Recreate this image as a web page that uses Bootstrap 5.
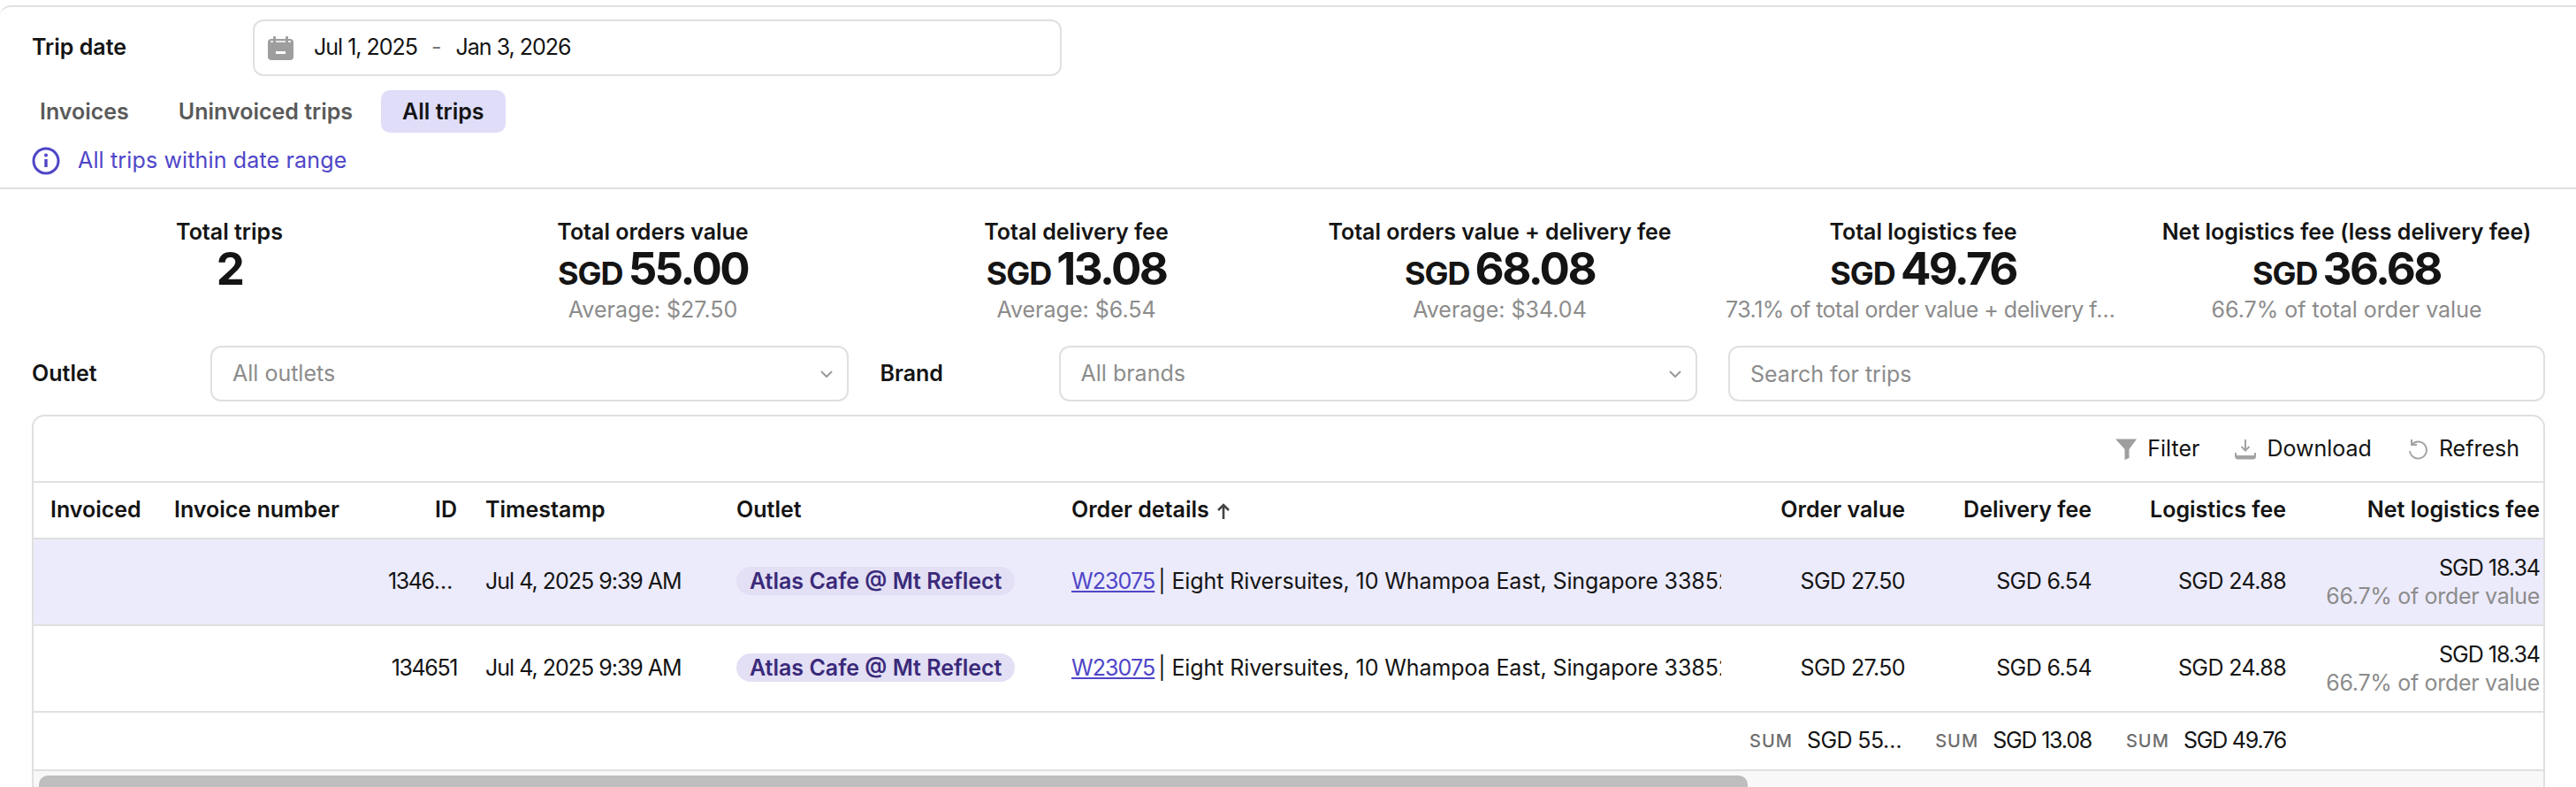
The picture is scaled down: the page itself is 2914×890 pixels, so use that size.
<!DOCTYPE html>
<html lang="en">
<head>
    <meta charset="UTF-8">
    <meta name="viewport" content="width=device-width, initial-scale=1.0">
    <title>Trips</title>
    <link href="https://cdn.jsdelivr.net/npm/bootstrap@5.3.0/dist/css/bootstrap.min.css" rel="stylesheet">
    <style>
        html, body {
            height: 890px;
            overflow: hidden;
        }
        body {
            font-family: Inter, "Liberation Sans", sans-serif;
            font-size: 25px;
            color: #141414;
            background: #fff;
        }
        .page-frame {
            margin-top: 6px;
            border-top: 2px solid #e0e0e0;
            border-top-left-radius: 12px;
        }
        .head-block {
            padding: 14px 36px 14px;
            border-bottom: 2px solid #e0e0e0;
            height: 206px;
        }
        .field-label {
            font-weight: 600;
            font-size: 25px;
        }
        .date-label { width: 250px; }
        .date-box {
            width: 915px;
            height: 64px;
            border: 2px solid #e0e0e0;
            border-radius: 12px;
            padding-left: 15px;
        }
        .date-icon { margin-right: 23px; }
        .date-box .dash { color: #777; margin: 0 16px; }
        .num-tight { letter-spacing: -1px; }
        .tab-row { margin-top: 16px; margin-left: -15px; gap: 8px; }
        .tab-row .nav-link {
            height: 48px;
            line-height: 48px;
            padding: 0 24px;
            font-size: 25px;
            font-weight: 600;
            color: #5a5a5a;
            border-radius: 10px;
        }
        .tab-row .nav-link.active {
            background: #dfddf8;
            color: #141414;
        }
        .info-line {
            margin-top: 16px;
            height: 32px;
            gap: 20px;
            color: #4f46c8;
            letter-spacing: 0.150px;
        }
        .stat-grid {
            display: grid;
            grid-template-columns: repeat(6, 479px);
            padding: 30px 20px 0;
            text-align: center;
        }
        .stat-title { font-weight: 600; line-height: 36px; font-size: 25px; }
        .stat-value {
            font-weight: 700;
            font-size: 51px;
            letter-spacing: -2.600px;
            line-height: 48px;
            height: 48px;
        }
        .stat-value .unit { font-size: 36px; letter-spacing: -1px; margin-right: 6px; }
        .stat-note {
            color: #8c8c8c;
            line-height: 40px;
            margin-top: 2px;
            padding: 0 16px;
            white-space: nowrap;
        }
        .note-cut {
            overflow: hidden;
            text-overflow: ellipsis;
            letter-spacing: -0.500px;
        }
        .filter-grid {
            display: grid;
            grid-template-columns: repeat(3, 924px);
            column-gap: 35.5px;
            padding: 21px 36px 0;
        }
        .filter-cell { height: 63px; }
        .filter-cell .field-label { width: 202px; flex: none; }
        .filter-cell .form-select, .filter-cell .form-control {
            height: 63px;
            font-size: 25px;
            border: 2px solid #e0e0e0;
            border-radius: 12px;
            padding: 0 23px;
            color: #8c8c8c;
            box-shadow: none;
        }
        .filter-cell .form-select {
            background-image: url("data:image/svg+xml,%3csvg xmlns='http://www.w3.org/2000/svg' viewBox='0 0 14 8'%3e%3cpath fill='none' stroke='%23999' stroke-width='2' d='M1 1l6 6 6-6'/%3e%3c/svg%3e");
            background-size: 14px 8px;
            background-position: right 16px center;
        }
        .filter-cell .form-control::placeholder { color: #8c8c8c; opacity: 1; }
        .trip-card {
            margin: 15px 35px 0 36px;
            height: 421px;
            border: 2px solid #e0e0e0;
            border-bottom: 0;
            border-radius: 14px 14px 0 0;
            overflow: hidden;
        }
        .tool-bar {
            height: 75px;
            border-bottom: 2px solid #e0e0e0;
            padding-right: 27px;
            gap: 40px;
        }
        .tool-bar span { margin-left: 12px; }
        .table-clip { overflow: hidden; }
        .trip-table {
            table-layout: fixed;
            width: 2851px;
            max-width: none;
            margin: 0;
            font-size: 25px;
            color: #141414;
        }
        .trip-table > :not(caption) > * > * {
            padding: 0 16px;
            border-bottom: 2px solid #e0e0e0;
            vertical-align: middle;
            background: transparent;
            box-shadow: none;
            color: inherit;
            white-space: nowrap;
        }
        .trip-table thead th { height: 63px; font-weight: 600; }
        .trip-table thead th:first-child { padding-left: 19px; }
        .trip-table tbody tr.data-row > td { height: 98px; }
        .trip-table tbody tr.sum-row > td { height: 66px; }
        .trip-table tr.picked > td { background: #ecebfb; }
        .sort-arrow { margin-left: 2px; }
        .address-clip { overflow: hidden; letter-spacing: -0.100px; }
        .id-short {
            display: block;
            width: 74px;
            margin-right: 4px;
            margin-left: auto;
            overflow: hidden;
            text-overflow: ellipsis;
            letter-spacing: -1.400px;
            text-align: left;
        }
        .id-full { letter-spacing: -1.400px; }
        .outlet-tag {
            display: inline-block;
            height: 32px;
            line-height: 32px;
            padding: 0 15px;
            border-radius: 16px;
            background: #e3dff4;
            color: #3a2a7a;
            font-weight: 600;
        }
        .order-link { color: #4f46c8; letter-spacing: -0.900px; margin-right: -3px; }
        .money { letter-spacing: -0.600px; }
        .pct-note { color: #8c8c8c; line-height: 32px; letter-spacing: -0.300px; }
        .net-value { line-height: 31px; letter-spacing: -1px; }
        .sum-tag {
            color: #6e6e6e;
            font-size: 20px;
            font-weight: 500;
            letter-spacing: 1px;
            flex: none;
        }
        .sum-value {
            display: inline-block;
            overflow: hidden;
            text-overflow: ellipsis;
            letter-spacing: -1.200px;
            white-space: nowrap;
        }
        .sum-cut { max-width: 113px; letter-spacing: -0.600px; }
        .sum-gap { gap: 16px; }
        .scroll-track {
            height: 30px;
            background: #f8f8f8;
            padding: 5px 0 0 6px;
        }
        .scroll-thumb {
            width: 1933px;
            height: 24px;
            background: #bebebe;
            border-radius: 10px;
        }
    </style>
</head>
<body>
    <div class="page-frame">
        <!-- Date and tabs -->
        <div class="head-block">
            <div class="d-flex align-items-center">
                <div class="field-label date-label">Trip date</div>
                <div class="date-box d-flex align-items-center">
                    <svg width="29" height="27" viewBox="0 0 29 27" class="date-icon">
                        <rect x="0" y="3" width="29" height="24" rx="4" fill="#9e9e9e"/>
                        <rect x="6" y="0" width="3" height="7" rx="1" fill="#9e9e9e"/>
                        <rect x="20" y="0" width="3" height="7" rx="1" fill="#9e9e9e"/>
                        <path d="M3 6h3M9 6h11M23 6h3" stroke="#fff" stroke-width="1.5"/>
                        <rect x="9" y="17" width="11" height="3" fill="#fff"/>
                    </svg>
                    <span class="num-tight">Jul 1, 2025</span><span class="dash">-</span><span class="num-tight">Jan 3, 2026</span>
                </div>
            </div>
            <ul class="nav tab-row">
                <li class="nav-item"><a class="nav-link" href="#">Invoices</a></li>
                <li class="nav-item"><a class="nav-link" href="#">Uninvoiced trips</a></li>
                <li class="nav-item"><a class="nav-link active" href="#">All trips</a></li>
            </ul>
            <div class="info-line d-flex align-items-center">
                <svg width="32" height="32" viewBox="0 0 32 32" fill="none" stroke="#4f46c8">
                    <circle cx="16" cy="16" r="14" stroke-width="3"/>
                    <path d="M16 14v9" stroke-width="3.4"/>
                    <circle cx="16" cy="9.5" r="2" fill="#4f46c8" stroke="none"/>
                </svg>
                <span>All trips within date range</span>
            </div>
        </div>

        <!-- Totals -->
        <div class="stat-grid">
            <div>
                <div class="stat-title">Total trips</div>
                <div class="stat-value">2</div>
            </div>
            <div>
                <div class="stat-title">Total orders value</div>
                <div class="stat-value"><span class="unit">SGD</span>55.00</div>
                <div class="stat-note">Average: $27.50</div>
            </div>
            <div>
                <div class="stat-title">Total delivery fee</div>
                <div class="stat-value"><span class="unit">SGD</span>13.08</div>
                <div class="stat-note">Average: $6.54</div>
            </div>
            <div>
                <div class="stat-title">Total orders value + delivery fee</div>
                <div class="stat-value"><span class="unit">SGD</span>68.08</div>
                <div class="stat-note">Average: $34.04</div>
            </div>
            <div>
                <div class="stat-title">Total logistics fee</div>
                <div class="stat-value"><span class="unit">SGD</span>49.76</div>
                <div class="stat-note note-cut">73.1% of total order value + delivery fee</div>
            </div>
            <div>
                <div class="stat-title">Net logistics fee (less delivery fee)</div>
                <div class="stat-value"><span class="unit">SGD</span>36.68</div>
                <div class="stat-note">66.7% of total order value</div>
            </div>
        </div>

        <!-- Filters -->
        <div class="filter-grid">
            <div class="filter-cell d-flex align-items-center">
                <div class="field-label">Outlet</div>
                <select class="form-select"><option>All outlets</option></select>
            </div>
            <div class="filter-cell d-flex align-items-center">
                <div class="field-label">Brand</div>
                <select class="form-select"><option>All brands</option></select>
            </div>
            <div class="filter-cell">
                <input type="text" class="form-control" placeholder="Search for trips">
            </div>
        </div>

        <!-- Trips table -->
        <div class="trip-card">
            <div class="tool-bar d-flex align-items-center justify-content-end">
                <div class="d-flex align-items-center">
                    <svg width="24" height="24" viewBox="0 0 24 24"><path d="M0 0.5h24l-8.5 11.5v10l-5 2V12z" fill="#9e9e9e"/></svg>
                    <span>Filter</span>
                </div>
                <div class="d-flex align-items-center">
                    <svg width="24" height="24" viewBox="0 0 24 24" fill="none" stroke="#a3a3a3" stroke-width="2">
                        <path d="M12 1v12M7.5 9l4.5 4.5L16.5 9"/>
                        <path d="M1 16v4a2.500 2.500 0 0 0 2.500 2.500h17A2.500 2.500 0 0 0 23 20v-4" />
                        <path d="M2 21h20" stroke-width="4"/>
                    </svg>
                    <span>Download</span>
                </div>
                <div class="d-flex align-items-center">
                    <svg width="24" height="24" viewBox="0 0 24 24" fill="none" stroke="#a3a3a3" stroke-width="2">
                        <path d="M5 1v6h6"/>
                        <path d="M5.500 6.500A9.500 9.500 0 1 1 3 14"/>
                    </svg>
                    <span>Refresh</span>
                </div>
            </div>
            <div class="table-clip">
                <table class="table trip-table">
                    <colgroup>
                        <col style="width:143px"><col style="width:218px"><col style="width:134px"><col style="width:284px"><col style="width:379px">
                        <col style="width:767px"><col style="width:208px"><col style="width:211px"><col style="width:220px"><col style="width:287px">
                    </colgroup>
                    <thead>
                        <tr>
                            <th>Invoiced</th>
                            <th>Invoice number</th>
                            <th class="text-end">ID</th>
                            <th>Timestamp</th>
                            <th>Outlet</th>
                            <th>
                                Order details
                                <svg class="sort-arrow" width="16" height="18" viewBox="0 0 16 18" fill="none" stroke="#444" stroke-width="2.600"><path d="M8 18V2M2 8l6-6 6 6"/></svg>
                            </th>
                            <th class="text-end">Order value</th>
                            <th class="text-end">Delivery fee</th>
                            <th class="text-end">Logistics fee</th>
                            <th class="text-end">Net logistics fee</th>
                        </tr>
                    </thead>
                    <tbody>
                        <tr class="data-row picked">
                            <td></td>
                            <td></td>
                            <td class="text-end"><span class="id-short">134651</span></td>
                            <td class="num-tight">Jul 4, 2025 9:39 AM</td>
                            <td><span class="outlet-tag">Atlas Cafe @ Mt Reflect</span></td>
                            <td><div class="address-clip"><a class="order-link" href="#">W23075</a> | Eight Riversuites, 10 Whampoa East, Singapore 338522</div></td>
                            <td class="text-end money">SGD 27.50</td>
                            <td class="text-end money">SGD 6.54</td>
                            <td class="text-end money">SGD 24.88</td>
                            <td class="text-end">
                                <div class="net-value">SGD 18.34</div>
                                <div class="pct-note">66.7% of order value</div>
                            </td>
                        </tr>
                        <tr class="data-row">
                            <td></td>
                            <td></td>
                            <td class="text-end id-full">134651</td>
                            <td class="num-tight">Jul 4, 2025 9:39 AM</td>
                            <td><span class="outlet-tag">Atlas Cafe @ Mt Reflect</span></td>
                            <td><div class="address-clip"><a class="order-link" href="#">W23075</a> | Eight Riversuites, 10 Whampoa East, Singapore 338522</div></td>
                            <td class="text-end money">SGD 27.50</td>
                            <td class="text-end money">SGD 6.54</td>
                            <td class="text-end money">SGD 24.88</td>
                            <td class="text-end">
                                <div class="net-value">SGD 18.34</div>
                                <div class="pct-note">66.7% of order value</div>
                            </td>
                        </tr>
                        <tr class="sum-row">
                            <td colspan="6"></td>
                            <td>
                                <div class="d-flex justify-content-end align-items-center sum-gap">
                                    <span class="sum-tag">SUM</span><span class="sum-value sum-cut">SGD 55.00</span>
                                </div>
                            </td>
                            <td>
                                <div class="d-flex justify-content-end align-items-center sum-gap">
                                    <span class="sum-tag">SUM</span><span class="sum-value">SGD 13.08</span>
                                </div>
                            </td>
                            <td>
                                <div class="d-flex justify-content-end align-items-center sum-gap">
                                    <span class="sum-tag">SUM</span><span class="sum-value">SGD 49.76</span>
                                </div>
                            </td>
                            <td></td>
                        </tr>
                    </tbody>
                </table>
            </div>
            <div class="scroll-track"><div class="scroll-thumb"></div></div>
        </div>
    </div>
    <script src="https://cdn.jsdelivr.net/npm/bootstrap@5.3.0/dist/js/bootstrap.bundle.min.js"></script>
</body>
</html>
